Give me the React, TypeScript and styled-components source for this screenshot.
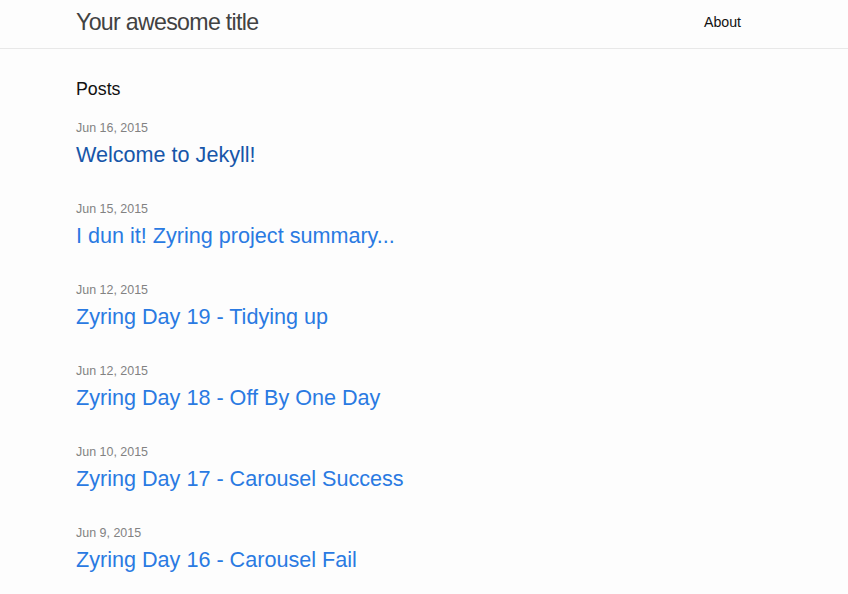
import React from "react";
import styled, { createGlobalStyle } from "styled-components";

const Global = createGlobalStyle`
  html, body { margin: 0; padding: 0; }
  body {
    background: #fdfdfd;
    color: #111;
    font-family: "Liberation Sans", Arial, sans-serif;
    font-size: 14.2px;
    line-height: 1.5;
  }
`;

const Header = styled.header`
  border-bottom: 1px solid #e8e8e8;
`;

const Wrapper = styled.div`
  width: 665px;
  margin-left: 76px;
`;

const HeaderBar = styled(Wrapper)`
  display: flex;
  justify-content: space-between;
  align-items: flex-start;
  height: 48px;
  line-height: 44px;
`;

const SiteTitle = styled.a`
  font-size: 23.2px;
  letter-spacing: -0.7px;
  color: #424242;
  text-decoration: none;
`;

const Nav = styled.nav`
  display: flex;
  gap: 18px;
`;

const PageLink = styled.a`
  color: #111;
  font-size: 14.2px;
  text-decoration: none;
`;

const Main = styled(Wrapper)`
  padding-top: 27px;
`;

const Heading = styled.h1`
  margin: 0 0 15px;
  font-size: 17.8px;
  font-weight: normal;
  line-height: 26.7px;
`;

const PostList = styled.ul`
  list-style: none;
  margin: 0;
  padding: 0;
`;

const PostItem = styled.li`
  margin-bottom: 28px;
`;

const PostMeta = styled.div`
  font-size: 12.46px;
  line-height: 21px;
  color: #828282;
`;

const PostTitle = styled.h2`
  margin: 0;
  font-size: 21.6px;
  font-weight: normal;
  line-height: 32px;
`;

const PostLink = styled.a<{ $visited?: boolean }>`
  color: ${(p) => (p.$visited ? "#1756a9" : "#2a7ae2")};
  text-decoration: none;
`;

const posts = [
  { date: "Jun 16, 2015", title: "Welcome to Jekyll!", visited: true },
  { date: "Jun 15, 2015", title: "I dun it! Zyring project summary..." },
  { date: "Jun 12, 2015", title: "Zyring Day 19 - Tidying up" },
  { date: "Jun 12, 2015", title: "Zyring Day 18 - Off By One Day" },
  { date: "Jun 10, 2015", title: "Zyring Day 17 - Carousel Success" },
  { date: "Jun 9, 2015", title: "Zyring Day 16 - Carousel Fail" },
];

export default function App() {
  return (
    <>
      <Global />
      <Header>
        <HeaderBar>
          <SiteTitle href="#">Your awesome title</SiteTitle>
          <Nav>
            <PageLink href="#">About</PageLink>
          </Nav>
        </HeaderBar>
      </Header>
      <Main as="main">
        <Heading>Posts</Heading>
        <PostList>
          {posts.map((p, i) => (
            <PostItem key={i}>
              <PostMeta>{p.date}</PostMeta>
              <PostTitle>
                <PostLink href="#" $visited={p.visited}>
                  {p.title}
                </PostLink>
              </PostTitle>
            </PostItem>
          ))}
        </PostList>
      </Main>
    </>
  );
}
